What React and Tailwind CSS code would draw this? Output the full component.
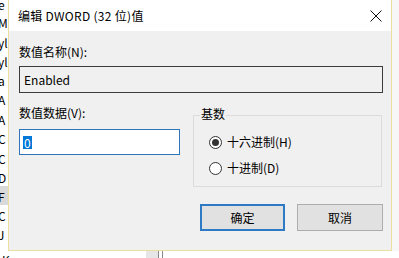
import React from 'react';

const FONT = { fontFamily: '"Noto Sans CJK SC", "Noto Sans", sans-serif' };

const bgRows = [
  { t: 'e', y: 'h-[13px]' },
  { t: 'M', y: 'h-[18px]' },
  { t: 'yl', y: 'h-[20px]' },
  { t: 'yl', y: 'h-[19px]' },
  { t: 'a', y: 'h-[19px]' },
  { t: 'A', y: 'h-[19px]' },
  { t: 'A', y: 'h-[20px]' },
  { t: 'C', y: 'h-[19px]' },
  { t: 'C', y: 'h-[20px]' },
  { t: 'D', y: 'h-[19px]' },
  { t: 'F', y: 'h-[19px]', sel: true },
  { t: 'C', y: 'h-[19px]' },
  { t: 'J', y: 'h-[19px]' },
];

const Radio = ({ checked, label }) => (
  <div className="flex items-center h-4 gap-[5px]">
    <span className="w-[13px] h-[13px] rounded-full border border-[#333] bg-white flex items-center justify-center">
      {checked && <span className="w-[7px] h-[7px] rounded-full bg-[#333]" />}
    </span>
    <span className="text-[12px] leading-4 text-black">{label}</span>
  </div>
);

export default function App() {
  return (
    <div className="w-[399px] h-[258px] bg-white overflow-hidden flex flex-col" style={FONT}>
      <div className="flex h-[251px]">
        {/* window behind, left edge */}
        <div className="w-[8px] overflow-hidden bg-white flex flex-col text-[12px] leading-4 text-black">
          {bgRows.map((r, i) => (
            <div key={i} className={`${r.y} flex items-end -ml-[2px] ${r.sel ? 'bg-[#d9d9d9]' : ''}`}>
              {r.t}
            </div>
          ))}
        </div>

        {/* dialog */}
        <div className="w-[384px] border-x border-b border-[#eadf9c] flex flex-col bg-[#f0f0f0]">
          <div className="h-[31px] bg-white flex items-center justify-between pl-[9px] pr-[8px]">
            <span className="text-[12px] tracking-[0.3px] text-black">编辑 DWORD (32 位)值</span>
            <svg width="12" height="12" viewBox="0 0 12 12" className="mr-[1px]">
              <path d="M0.5 0.5 L11.5 11.5 M11.5 0.5 L0.5 11.5" stroke="#111" strokeWidth="1" />
            </svg>
          </div>

          <div className="flex-1 pl-[10px] pr-[8px] pt-[13px] flex flex-col">
            <div className="text-[12px] leading-4 text-black">数值名称(N):</div>
            <div className="mt-[6px] h-[27px] border border-[#3c3c3c] bg-[#f0f0f0] flex items-center pl-1 text-[12px] text-black">
              Enabled
            </div>

            <div className="mt-[12px] flex gap-[13px]">
              <div className="w-[161px] flex flex-col">
                <div className="text-[12px] leading-4 text-black">数值数据(V):</div>
                <div className="mt-[8px] h-[26px] border border-[#2f73b8] bg-white flex items-center pl-[3px]">
                  <span className="bg-[#0078d7] text-white text-[12px] leading-[13px] px-px">0</span>
                </div>
              </div>

              <div className="relative mt-[10px] w-[189px] h-[72px] border border-[#dcdcdc] pl-[15px] pt-[18px] flex flex-col gap-[10px]">
                <span className="absolute -top-[10px] left-[6px] px-px bg-[#f0f0f0] text-[12px] leading-4 text-black">基数</span>
                <Radio checked label="十六进制(H)" />
                <Radio label="十进制(D)" />
              </div>
            </div>

            <div className="mt-[17px] flex justify-end gap-[12px]">
              <button className="w-[85px] h-[27px] border-2 border-[#2f7ac4] bg-[#e1e1e1] text-[12px] text-black">确定</button>
              <button className="w-[86px] h-[27px] border border-[#adadad] bg-[#e1e1e1] text-[12px] text-black">取消</button>
            </div>
          </div>
        </div>

        <div className="flex-1 bg-[#f7f7f7]" />
      </div>

      {/* window behind, bottom edge */}
      <div className="flex-1 relative bg-white overflow-hidden">
        <span className="absolute left-[2px] top-[1px] text-[12px] leading-4 text-black">Key</span>
        <span className="absolute left-[146px] top-0 w-[12px] h-[7px] bg-[#e6e6e6]" />
        <span className="absolute left-[158px] top-0 w-px h-[7px] bg-[#888]" />
        <span className="absolute left-[162px] top-0 w-px h-[7px] bg-[#888]" />
      </div>
    </div>
  );
}
